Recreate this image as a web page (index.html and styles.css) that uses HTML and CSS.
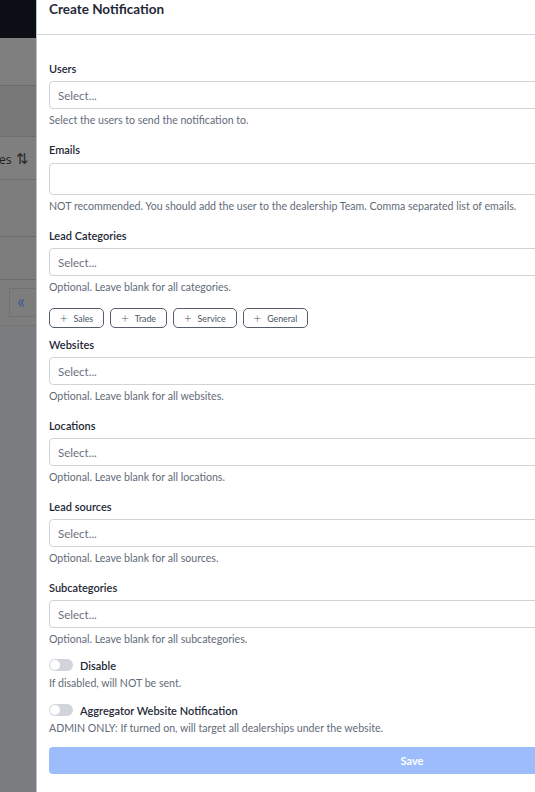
FILE: index.html
```html
<!DOCTYPE html>
<html lang="en">
<head>
<meta charset="utf-8">
<title>Create Notification</title>
<link rel="stylesheet" href="styles.css">
</head>
<body>
<div class="screen">
  <div class="backdrop">
    <div class="bd-nav"></div>
    <div class="bd-row bd-r1"></div>
    <div class="bd-row bd-r2"></div>
    <div class="bd-row bd-r3"><span class="bd-th">es <span class="sort">&#8645;</span></span></div>
    <div class="bd-row bd-r4"></div>
    <div class="bd-row bd-r5"></div>
    <div class="bd-row bd-r6"><span class="bd-page">&laquo;</span></div>
    <div class="bd-rest"></div>
  </div>
  <div class="panel">
    <div class="panel-header">
      <h1 class="panel-title">Create Notification</h1>
    </div>
    <form class="panel-body">
      <div class="field">
        <label class="label">Users</label>
        <div class="input"><span class="placeholder">Select...</span></div>
        <p class="help">Select the users to send the notification to.</p>
      </div>
      <div class="field">
        <label class="label">Emails</label>
        <div class="input input-tall"></div>
        <p class="help">NOT recommended. You should add the user to the dealership Team. Comma separated list of emails.</p>
      </div>
      <div class="field">
        <label class="label">Lead Categories</label>
        <div class="input"><span class="placeholder">Select...</span></div>
        <p class="help">Optional. Leave blank for all categories.</p>
      </div>
      <div class="chips">
        <span class="chip"><span class="plus">+</span>Sales</span>
        <span class="chip"><span class="plus">+</span>Trade</span>
        <span class="chip"><span class="plus">+</span>Service</span>
        <span class="chip"><span class="plus">+</span>General</span>
      </div>
      <div class="field">
        <label class="label">Websites</label>
        <div class="input"><span class="placeholder">Select...</span></div>
        <p class="help">Optional. Leave blank for all websites.</p>
      </div>
      <div class="field">
        <label class="label">Locations</label>
        <div class="input"><span class="placeholder">Select...</span></div>
        <p class="help">Optional. Leave blank for all locations.</p>
      </div>
      <div class="field">
        <label class="label">Lead sources</label>
        <div class="input"><span class="placeholder">Select...</span></div>
        <p class="help">Optional. Leave blank for all sources.</p>
      </div>
      <div class="field">
        <label class="label">Subcategories</label>
        <div class="input"><span class="placeholder">Select...</span></div>
        <p class="help">Optional. Leave blank for all subcategories.</p>
      </div>
      <div class="toggle-field">
        <div class="toggle-row"><span class="switch"><span class="knob"></span></span><span class="toggle-label">Disable</span></div>
        <p class="help help-tight">If disabled, will NOT be sent.</p>
      </div>
      <div class="toggle-field">
        <div class="toggle-row"><span class="switch"><span class="knob"></span></span><span class="toggle-label">Aggregator Website Notification</span></div>
        <p class="help help-tight">ADMIN ONLY: If turned on, will target all dealerships under the website.</p>
      </div>
      <button type="button" class="save">Save</button>
    </form>
  </div>
</div>
</body>
</html>
```

FILE: styles.css
```css
html, body {
  margin: 0;
  padding: 0;
  height: 100%;
  overflow: hidden;
  background: #ffffff;
  font-family: "Lato", "Liberation Sans", sans-serif;
}

.screen {
  display: flex;
  height: 792px;
  width: 535px;
  overflow: hidden;
}

.backdrop {
  width: 36px;
  flex: none;
  display: flex;
  flex-direction: column;
  background: #7b7c7f;
}

.bd-nav {
  height: 38px;
  background: #0b0e15;
}

.bd-row {
  border-bottom: 1px solid #6c6c6c;
  display: flex;
  align-items: center;
  overflow: hidden;
  white-space: nowrap;
}

.bd-r1 { height: 47px; background: #7f7f7f; }
.bd-r2 { height: 50px; background: #787878; }
.bd-r3 { height: 42px; background: #7f7f7f; }
.bd-r4 { height: 56px; background: #7d7d7d; }
.bd-r5 { height: 42px; background: #7d7d7d; }
.bd-r6 { height: 45px; background: #7d7d7d; border-bottom-color: #727272; }

.bd-th {
  font-family: "Open Sans", sans-serif;
  font-size: 12px;
  color: #1e1e1e;
  margin-left: -1px;
}

.sort {
  color: #2c2c2c;
  font-size: 15px;
  margin-left: 1px;
}

.bd-page {
  margin-left: 9px;
  width: 30px;
  height: 29px;
  box-sizing: border-box;
  border: 1px solid #717171;
  border-right: none;
  border-radius: 2px 0 0 2px;
  color: #3d5a8e;
  font-size: 19px;
  line-height: 24px;
  padding-left: 7px;
}

.bd-rest { flex: 1; }

.panel {
  flex: none;
  width: 752px;
  background: #ffffff;
  border-left: 1px solid #b9bec7;
  display: flex;
  flex-direction: column;
}

.panel-header {
  padding: 0 12px 16px;
  border-bottom: 1px solid #d2d8e0;
}

.panel-title {
  margin: 0;
  font-size: 13.5px;
  line-height: 18px;
  font-weight: 700;
  color: #1f2937;
}

.panel-body {
  padding: 26px 12px 0;
  display: flex;
  flex-direction: column;
}

.field {
  display: flex;
  flex-direction: column;
  margin-bottom: 15px;
}

.label {
  font-size: 11px;
  line-height: 16px;
  font-weight: 600;
  color: #1f2937;
  margin-bottom: 4px;
}

.input {
  height: 28px;
  box-sizing: border-box;
  border: 1px solid #cfd4db;
  border-radius: 4px;
  display: flex;
  align-items: center;
  padding: 0 8px;
}

.input-tall {
  height: 32px;
  margin-top: 1px;
}

.placeholder {
  font-size: 11.5px;
  color: #6b7280;
}

.help {
  margin: 4px 0 0;
  font-size: 10.6px;
  line-height: 14px;
  color: #626b78;
  white-space: nowrap;
}

.chips {
  display: flex;
  gap: 6px;
  margin: -1px 0 9px;
}

.chip {
  height: 20px;
  box-sizing: border-box;
  border: 1px solid #555d69;
  border-radius: 5px;
  padding: 0 10px 0 10px;
  font-size: 8.8px;
  color: #4b5563;
  display: inline-flex;
  align-items: center;
}

.plus {
  font-size: 13px;
  font-weight: 300;
  margin-right: 6px;
  line-height: 1;
}

.toggle-field {
  display: flex;
  flex-direction: column;
  margin: -4px 0 16px;
}

.toggle-row {
  display: flex;
  align-items: center;
  height: 16px;
}

.switch {
  width: 24px;
  height: 12px;
  border-radius: 6px;
  background: #d1d5db;
  position: relative;
  margin-right: 7px;
}

.knob {
  position: absolute;
  left: 1px;
  top: 1px;
  width: 10px;
  height: 10px;
  border-radius: 50%;
  background: #ffffff;
}

.toggle-label {
  font-size: 11px;
  font-weight: 600;
  color: #1f2937;
}

.help-tight {
  margin-top: 3px;
}

.save {
  margin-top: -4px;
  height: 27px;
  width: 726px;
  border: none;
  border-radius: 4px;
  background: #9cbcfb;
  color: #ffffff;
  font-family: inherit;
  font-size: 11px;
  font-weight: 700;
  padding: 0;
}
```
